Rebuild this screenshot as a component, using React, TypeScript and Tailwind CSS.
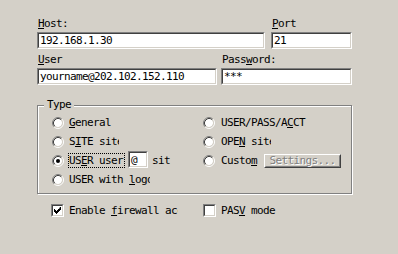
import type { ReactNode } from "react";

const Sunken = ({ className = "", inner = "", children }: { className?: string; inner?: string; children?: ReactNode }) => (
  <div className={`border border-t-[#808080] border-l-[#808080] border-r-white border-b-white ${className}`}>
    <div className={`h-full border border-t-[#404040] border-l-[#404040] border-r-[#d4d0c8] border-b-[#d4d0c8] bg-white ${inner}`}>
      {children}
    </div>
  </div>
);

const U = ({ children }: { children: ReactNode }) => (
  <span className="underline decoration-1 underline-offset-[1px]">{children}</span>
);

const Radio = ({ on = false }: { on?: boolean }) => (
  <svg width="12" height="12" viewBox="0 0 12 12" className="shrink-0">
    <circle cx="6" cy="6" r="4" fill="#fff" />
    <path d="M2.11 9.89 A5.5 5.5 0 0 1 9.89 2.11" stroke="#808080" fill="none" />
    <path d="M9.89 2.11 A5.5 5.5 0 0 1 2.11 9.89" stroke="#fff" fill="none" />
    <path d="M2.82 9.18 A4.5 4.5 0 0 1 9.18 2.82" stroke="#404040" fill="none" />
    <path d="M9.18 2.82 A4.5 4.5 0 0 1 2.82 9.18" stroke="#d4d0c8" fill="none" />
    {on && <circle cx="6" cy="6" r="2" fill="#000" />}
  </svg>
);

const Check = ({ on = false }: { on?: boolean }) => (
  <Sunken className="w-[13px] h-[13px] shrink-0">
    {on && (
      <svg width="9" height="9" viewBox="0 0 9 9" className="block">
        <path d="M7 1h1v3h-1v1h-1v1h-1v1h-1v1h-1v-1h-1v-1h-1v-3h1v1h1v1h1v-1h1v-1h1z" fill="#000" />
      </svg>
    )}
  </Sunken>
);

const Row = ({ children }: { children: ReactNode }) => (
  <div className="flex items-center h-[19px] whitespace-nowrap">{children}</div>
);

export default function App() {
  return (
    <div className="w-[398px] h-[254px] bg-[#d4d0c8] text-black font-['DejaVu_Sans_Mono',monospace] text-[11px] leading-[12px] tracking-[-0.62px] pl-[37px] pt-[18px] overflow-hidden">
      {/* host / port */}
      <div className="flex gap-[6px]">
        <div className="w-[228px]">
          <div className="h-[12px] pl-[1px] mb-[2px]"><U>H</U>ost:</div>
          <Sunken className="h-[17px]" inner="pl-[1px] flex items-center">192.168.1.30</Sunken>
        </div>
        <div className="w-[81px]">
          <div className="h-[12px] pl-[1px] mb-[2px]"><U>P</U>ort</div>
          <Sunken className="h-[17px]" inner="pl-[1px] flex items-center">21</Sunken>
        </div>
      </div>

      {/* user / password */}
      <div className="flex gap-[4px] mt-[5px]">
        <div className="w-[180px]">
          <div className="h-[12px] pl-[1px] mb-[2px]"><U>U</U>ser</div>
          <Sunken className="h-[17px]" inner="pl-[1px] flex items-center">yourname@202.102.152.110</Sunken>
        </div>
        <div className="w-[131px]">
          <div className="h-[12px] pl-[1px] mb-[2px]">Pass<U>w</U>ord:</div>
          <Sunken className="h-[17px]" inner="pl-[1px] flex items-center">***</Sunken>
        </div>
      </div>

      {/* type group */}
      <div className="relative mt-[20px] w-[315px] h-[89px] border border-[#808080] shadow-[inset_1px_1px_0_#fff,1px_1px_0_#fff] pl-[14px] pt-[7px]">
        <div className="absolute -top-[7px] left-[6px] bg-[#d4d0c8] px-[3px] h-[12px]">Type</div>
        <div className="grid grid-cols-[151px_1fr]">
          <div>
            <Row><Radio /><span className="ml-[5px]"><U>G</U>eneral</span></Row>
            <Row><Radio /><span className="ml-[5px] w-[50px] overflow-hidden">S<U>I</U>TE site</span></Row>
            <Row>
              <Radio on />
              <span className="ml-[4px] border border-dotted border-black h-[15px] pr-[1px] flex items-center">
                <span>US<U>E</U>R user</span>
              </span>
              <Sunken className="ml-[3px] w-[20px] h-[17px] -mt-[2px]" inner="pl-[1px] flex items-center">@</Sunken>
              <span className="ml-[4px]">sit</span>
            </Row>
            <Row><Radio /><span className="ml-[5px] w-[81px] overflow-hidden">USER with <U>l</U>ogon</span></Row>
          </div>
          <div>
            <Row><Radio /><span className="ml-[6px]">USER/PASS/A<U>C</U>CT</span></Row>
            <Row><Radio /><span className="ml-[6px] w-[50px] overflow-hidden">OPE<U>N</U> site</span></Row>
            <Row>
              <Radio />
              <span className="ml-[6px]">Custo<U>m</U></span>
              <div className="ml-[7px] w-[77px] h-[14px] border border-t-white border-l-white border-r-[#404040] border-b-[#404040]">
                <div className="h-full border border-t-[#d4d0c8] border-l-[#d4d0c8] border-r-[#808080] border-b-[#808080] flex items-center justify-center text-[#808080] [text-shadow:1px_1px_0_#fff]">
                  Settings...
                </div>
              </div>
            </Row>
          </div>
        </div>
      </div>

      {/* options */}
      <div className="flex items-center mt-[10px] pl-[14px]">
        <div className="flex items-center w-[152px]">
          <Check on />
          <span className="ml-[5px] w-[109px] overflow-hidden whitespace-nowrap">Enable <U>f</U>irewall access</span>
        </div>
        <Check />
        <span className="ml-[5px] whitespace-nowrap">PAS<U>V</U> mode</span>
      </div>
    </div>
  );
}
